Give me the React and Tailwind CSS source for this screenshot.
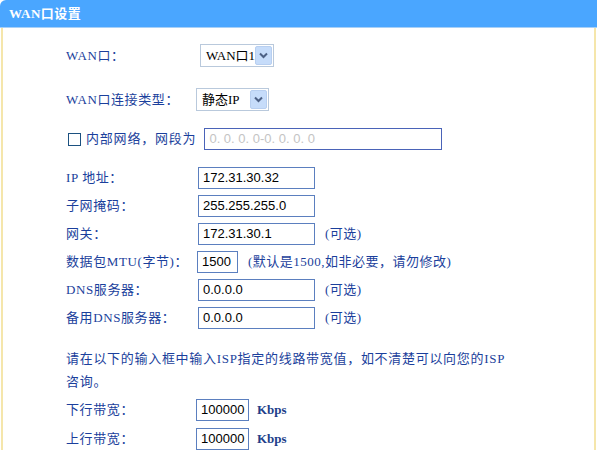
// WAN port settings panel (router admin page)
const LABEL = "text-[#1b3f9c]"
const FONT = { fontFamily: '"Liberation Serif", "Noto Sans CJK SC", serif' }

function TextBox({ value, width = 'w-[117px]', className = '' }) {
    return (
        <div
            className={`h-[22px] ${width} border border-[#5b7fbf] bg-white flex items-center px-[4px] text-[13px] text-black ${className}`}
            style={{ fontFamily: '"Liberation Sans", "Noto Sans CJK SC", sans-serif' }}
        >
            {value}
        </div>
    )
}

function Select({ value, width, className = '' }) {
    return (
        <div className={`h-[23px] ${width} border border-[#b9c9dc] bg-white flex items-center ${className}`}>
            <span className="flex-1 pl-[5px] text-[13px] text-black whitespace-nowrap">{value}</span>
            <span className="w-[17px] h-[19px] mr-[1px] rounded-[2px] border border-[#b8cff0] bg-[#c6dcfa] flex items-center justify-center">
                <svg width="9" height="7" viewBox="0 0 9 7">
                    <path d="M1 1.5 L4.5 5 L8 1.5" fill="none" stroke="#4d6185" strokeWidth="2" />
                </svg>
            </span>
        </div>
    )
}

function Row({ label, children, className = '' }) {
    return (
        <div className={`flex items-center ${className}`}>
            <div className={`w-[132px] text-[13px] tracking-[0.6px] ${LABEL} whitespace-nowrap`}>{label}</div>
            {children}
        </div>
    )
}

function Hint({ children }) {
    return <span className={`ml-[10px] text-[13px] tracking-[0.5px] ${LABEL} whitespace-nowrap`}>{children}</span>
}

export default function App() {
    return (
        <div className="w-[597px] h-[450px] overflow-hidden bg-white" style={FONT}>
            <div className="h-[28px] bg-[#4aa6ff] rounded-tl-[6px] border-b border-[#a8d0f7] flex items-center pl-[9px] text-white text-[13px] font-bold tracking-[0.5px]">
                WAN口设置
            </div>
            <div className="mx-[1px] border-l-2 border-r-2 border-[#f5e6ab] h-[422px] pl-[63px] pt-[16px]">
                <Row label="WAN口：">
                    <Select value="WAN口1" width="w-[74px]" className="ml-[2px]" />
                </Row>
                <Row label="WAN口连接类型：" className="mt-[21px]">
                    <Select value="静态IP" width="w-[73px]" className="ml-[-2px]" />
                </Row>
                <div className="flex items-center mt-[17px]">
                    <span className="w-[13px] h-[13px] border border-[#1c5180] bg-white ml-[2px]" />
                    <span className={`ml-[5px] text-[13px] tracking-[0.8px] ${LABEL} whitespace-nowrap`}>内部网络，网段为</span>
                    <div
                        className="ml-[8px] h-[22px] w-[238px] border border-[#4a63b8] bg-white flex items-center px-[4px] text-[13px] text-[#c4c4c4]"
                        style={{ fontFamily: '"Liberation Sans", sans-serif' }}
                    >
                        0. 0. 0. 0-0. 0. 0. 0
                    </div>
                </div>
                <div className="mt-[17px] flex flex-col gap-[6px]">
                    <Row label="IP 地址：">
                        <TextBox value="172.31.30.32" />
                    </Row>
                    <Row label="子网掩码：">
                        <TextBox value="255.255.255.0" />
                    </Row>
                    <Row label="网关：">
                        <TextBox value="172.31.30.1" />
                        <Hint>(可选)</Hint>
                    </Row>
                    <Row label="数据包MTU(字节)：">
                        <TextBox value="1500" width="w-[41px]" className="ml-[-1px]" />
                        <Hint>(默认是1500,如非必要，请勿修改)</Hint>
                    </Row>
                    <Row label="DNS服务器：">
                        <TextBox value="0.0.0.0" />
                        <Hint>(可选)</Hint>
                    </Row>
                    <Row label="备用DNS服务器：">
                        <TextBox value="0.0.0.0" />
                        <Hint>(可选)</Hint>
                    </Row>
                </div>
                <p className={`mt-[18px] whitespace-nowrap text-[13px] leading-[23px] tracking-[0.7px] ${LABEL}`}>
                    请在以下的输入框中输入ISP指定的线路带宽值，如不清楚可以向您的ISP
                    <br />
                    咨询。
                </p>
                <div className="mt-[6px] flex flex-col gap-[7px]">
                    <Row label="下行带宽：">
                        <TextBox value="100000" width="w-[53px]" className="ml-[-2px]" />
                        <span className="ml-[8px] text-[13px] font-bold text-[#213e8a]">Kbps</span>
                    </Row>
                    <Row label="上行带宽：">
                        <TextBox value="100000" width="w-[53px]" className="ml-[-2px]" />
                        <span className="ml-[8px] text-[13px] font-bold text-[#213e8a]">Kbps</span>
                    </Row>
                </div>
            </div>
        </div>
    )
}
